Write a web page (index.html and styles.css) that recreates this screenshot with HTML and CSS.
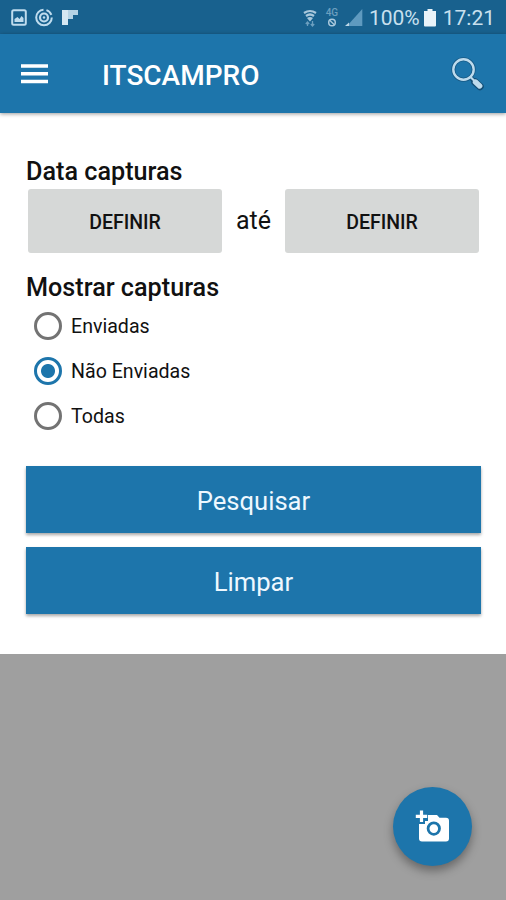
FILE: index.html
```html
<!DOCTYPE html>
<html lang="pt-BR">
  <head>
    <meta charset="UTF-8" />
    <meta name="viewport" content="width=device-width, initial-scale=1.0" />
    <title>ITSCAMPRO</title>
    <link rel="stylesheet" href="styles.css">
  </head>

  <body>
    <div class="status-bar">
      <svg class="status-left" width="70" height="20" viewBox="0 0 70 20">
        <rect x="1.2" y="2.2" width="13.6" height="14.6" rx="1.5" fill="none" stroke="#bfdcee" stroke-width="2" />
        <path d="M3.5 14v-3l3-2 2 2 2-3 2 2v4z" fill="#bfdcee" />
        <circle cx="33" cy="9.5" r="7.8" fill="none" stroke="#bfdcee" stroke-width="2" stroke-dasharray="36 3 7 3" />
        <circle cx="33" cy="9.5" r="4" fill="none" stroke="#bfdcee" stroke-width="2.2" />
        <circle cx="33" cy="9.5" r="1.2" fill="#bfdcee" />
        <path d="M51 2h16v5H62v4H57v6h-6z" fill="#b5d3e5" />
        <path d="M51 2h6v15h-6z" fill="#d5e7f2" />
      </svg>
      <div class="status-right">
        <svg class="wifi" width="14" height="18" viewBox="0 0 14 18">
          <path d="M1 4q6-4 12 0M3 7q4-3 8 0" fill="none" stroke="#a9c8dc" stroke-width="2.2" />
          <path d="M4 9q3-2 6 0l-3 3.5z" fill="#a9c8dc" />
          <path d="M4.5 17v-4M2.8 15l1.7-2 1.7 2M9.5 12v5M7.8 15l1.7 2 1.7-2" fill="none" stroke="#6c9fbf" stroke-width="1.3" />
        </svg>
        <div class="network">
          <span>4G</span>
          <svg width="10" height="9" viewBox="0 0 10 9">
            <circle cx="5" cy="4.5" r="3.3" fill="none" stroke="#a9c8dc" stroke-width="1.5" />
            <path d="M2.7 2.2l4.6 4.6" stroke="#a9c8dc" stroke-width="1.3" />
          </svg>
        </div>
        <svg class="signal" width="18" height="18" viewBox="0 0 18 18">
          <path d="M17.3 0v17H2z" fill="#5f9abf" />
          <path d="M4 13.5V17H0z" fill="#bcd7e7" />
        </svg>
        <span class="battery-level">100%</span>
        <svg class="battery" width="12" height="18" viewBox="0 0 12 18">
          <path d="M3.5 0h5v2H12v14.5q0 1-1 1H1q-1 0-1-1V2h3.5z" fill="#e8f3f9" />
        </svg>
        <span class="clock">17:21</span>
      </div>
    </div>

    <header class="app-bar">
      <svg class="menu" width="27" height="20" viewBox="0 0 27 20">
        <path d="M0 2h27M0 9.7h27M0 17.5h27" stroke="#fff" stroke-width="3.6" />
      </svg>
      <h1>ITSCAMPRO</h1>
      <svg class="search" width="34" height="34" viewBox="0 0 34 34">
        <path d="M19.5 20.5l3 3" stroke="#124e76" stroke-width="4.5" />
        <path d="M24 25l5 4.5" stroke="#124e76" stroke-width="7.5" stroke-linecap="round" />
        <circle cx="12.5" cy="12.5" r="10.2" fill="none" stroke="#165883" stroke-width="4" />
        <circle cx="12.5" cy="12.5" r="10.2" fill="none" stroke="#bddbed" stroke-width="2.4" />
        <path d="M19.5 20l4 4" stroke="#bddbed" stroke-width="2.2" />
        <path d="M24.5 25l4.2 4" stroke="#bddbed" stroke-width="5.4" stroke-linecap="round" />
      </svg>
    </header>

    <main class="filter">
      <h2>Data capturas</h2>
      <div class="date-range">
        <button class="btn-date">DEFINIR</button>
        <span>até</span>
        <button class="btn-date">DEFINIR</button>
      </div>

      <h2>Mostrar capturas</h2>
      <div class="radio-group">
        <label><input type="radio" name="status" value="enviadas" /><span>Enviadas</span></label>
        <label><input type="radio" name="status" value="nao_enviadas" checked /><span>Não Enviadas</span></label>
        <label><input type="radio" name="status" value="todas" /><span>Todas</span></label>
      </div>

      <div class="actions">
        <button class="btn-primary">Pesquisar</button>
        <button class="btn-primary">Limpar</button>
      </div>
    </main>

    <button class="fab" aria-label="Nova captura">
      <svg width="36" height="34" viewBox="0 0 36 34">
        <path d="M13 5h9l2.5 2.8H31q3 0 3 3v17.7q0 3-3 3H7q-3 0-3-3V14h6v-3h3z" fill="#fff" />
        <path d="M6.5 .5v11.5M.8 6.3h11.4" stroke="#fff" stroke-width="3.2" />
        <circle cx="18.8" cy="18.6" r="5.7" fill="none" stroke="#1d75ab" stroke-width="2.8" />
      </svg>
    </button>
  </body>
</html>
```
FILE: styles.css
```css
* {
  box-sizing: border-box;
}

body {
  margin: 0;
  height: 900px;
  overflow: hidden;
  display: flex;
  flex-direction: column;
  font-family: Roboto, "Liberation Sans", sans-serif;
  background-color: #9f9f9f;
  color: #111;
}

h1,
h2 {
  margin: 0;
}

button {
  border: none;
  font-family: inherit;
  cursor: pointer;
}

.status-bar {
  height: 34px;
  flex: none;
  display: flex;
  justify-content: space-between;
  align-items: center;
  padding: 1px 11px 0;
  background-color: #18618e;
  color: #c8e0ee;
}

.status-right {
  display: flex;
  align-items: center;
  font-size: 21px;
}

.network {
  display: flex;
  flex-direction: column;
  align-items: center;
  width: 14px;
  margin: 0 6px 0 8px;
  font-size: 10px;
  font-weight: 500;
  line-height: 10px;
  color: #6c9fbf;
}

.battery-level {
  margin: 0 4px 0 6px;
}

.clock {
  margin-left: 7px;
}

.app-bar {
  height: 79px;
  flex: none;
  display: flex;
  align-items: center;
  padding: 0 21px;
  background-color: #1d75ab;
  color: #fff;
  box-shadow: 0 1px 4px rgba(0, 0, 0, 0.4);
  z-index: 1;
}

.app-bar h1 {
  flex: 1;
  margin-left: 54px;
  padding-top: 3px;
  font-size: 28px;
  font-weight: 500;
}

.filter {
  height: 541px;
  flex: none;
  padding: 44px 25px 0 26px;
  background-color: #fff;
}

.filter h2 {
  font-size: 25.2px;
  font-weight: 500;
  line-height: 30px;
}

.date-range {
  display: flex;
  align-items: center;
  justify-content: space-between;
  padding: 2px 2px 0 2px;
  margin-bottom: 20px;
  font-size: 25px;
}

.date-range span {
  padding-bottom: 2px;
}

.btn-date {
  width: 194px;
  height: 64px;
  padding: 2px 0 0;
  border-radius: 3px;
  background-color: #d6d8d7;
  color: #111;
  font-size: 19.5px;
  font-weight: 500;
}

.radio-group {
  display: flex;
  flex-direction: column;
  padding-left: 8px;
}

.radio-group label {
  display: flex;
  align-items: center;
  height: 45px;
  gap: 9px;
  font-size: 19.6px;
}

.radio-group label span {
  padding-top: 2px;
}

.radio-group input {
  appearance: none;
  width: 28px;
  height: 28px;
  margin: 0;
  border: 3px solid #737373;
  border-radius: 50%;
}

.radio-group input:checked {
  border-color: #1d75ab;
  background: radial-gradient(circle, #1d75ab 6.5px, transparent 7.5px);
}

.actions {
  display: flex;
  flex-direction: column;
  gap: 14px;
  margin-top: 28px;
}

.btn-primary {
  height: 67px;
  padding: 2px 0 0;
  background-color: #1d75ab;
  color: #eef8ff;
  font-size: 25.6px;
  box-shadow: 0 2px 3px rgba(0, 0, 0, 0.35);
}

.fab {
  position: absolute;
  right: 34px;
  bottom: 34px;
  width: 79px;
  height: 79px;
  display: flex;
  align-items: center;
  justify-content: center;
  padding: 0;
  border-radius: 50%;
  background-color: #1d75ab;
  box-shadow: 0 5px 10px rgba(0, 0, 0, 0.35);
}
```
